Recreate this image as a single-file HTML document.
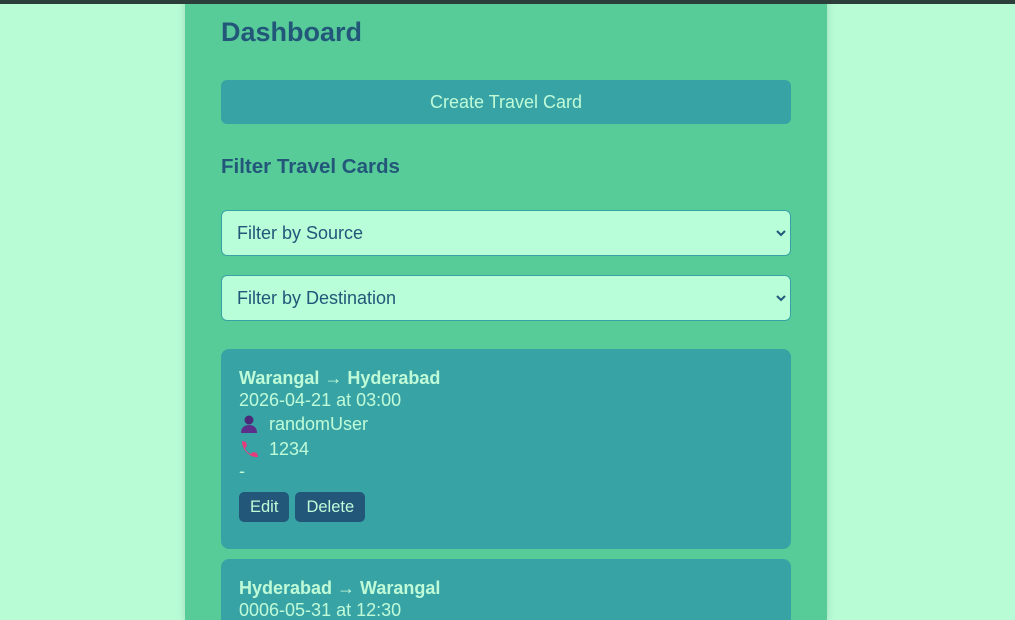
<!DOCTYPE html>
<html><head><style>
html,body{margin:0;height:620px;overflow:hidden}
body{background:#b8fcd6;font-family:"Liberation Sans",sans-serif;width:1015px;position:relative}
.top{position:absolute;top:0;left:0;right:0;height:4px;background:#2c3e3a;z-index:2}
.panel{position:absolute;left:185px;top:0;width:642px;height:620px;background:#57cc99;box-shadow:0 0 8px rgba(0,0,0,.15);overflow:hidden}
h1{position:absolute;left:36px;top:17px;margin:0;font-size:27px;color:#22577a;font-weight:bold}
.create{position:absolute;left:36px;top:80px;width:570px;height:44px;background:#38a3a5;border-radius:6px;color:#c0fbd8;font-size:18px;text-align:center;line-height:44px}
h2{position:absolute;left:36px;top:155px;margin:0;font-size:20.5px;color:#22577a}
.sel{position:absolute;left:36px;height:44px;background:#b8fed8;border:1px solid #38a3a5;border-radius:6px;color:#22577a;font-size:18px;line-height:44px;padding-left:15px;width:553px}
.sel svg{position:absolute;right:4px;top:18px}
.card{position:absolute;left:36px;width:570px;background:#38a3a5;border-radius:8px;color:#c0fbd8;font-size:18px}
.card .in{padding:18px 18px}
.card b{display:block;line-height:22px}
.line{line-height:25px;height:25px}
.btn{display:inline-block;background:#22577a;color:#c0fbd8;font-size:16.5px;padding:0 11px;height:30px;line-height:30px;border-radius:5px;margin-right:3px}
</style></head><body>
<div class="top"></div>
<div class="panel">
<h1>Dashboard</h1>
<div class="create">Create Travel Card</div>
<h2>Filter Travel Cards</h2>
<div class="sel" style="top:210px">Filter by Source<svg width="10" height="8" viewBox="0 0 10 8"><path d="M1 2l4 4 4-4" stroke="#22577a" stroke-width="2" fill="none"/></svg></div>
<div class="sel" style="top:275px">Filter by Destination<svg width="10" height="8" viewBox="0 0 10 8"><path d="M1 2l4 4 4-4" stroke="#22577a" stroke-width="2" fill="none"/></svg></div>
<div class="card" style="top:349px;height:200px"><div class="in">
<b>Warangal → Hyderabad</b>
<div class="line" style="line-height:22px;height:22px">2026-04-21 at 03:00</div>
<div class="line" style="height:25px;line-height:26px"><svg width="20" height="18" viewBox="0 0 20 18" style="vertical-align:-3px;margin-right:10px"><circle cx="10" cy="5" r="4.5" fill="#4b2a7a"/><path d="M2 18c0-6 4-8 8-8s8 2 8 8z" fill="#5b2f8a"/></svg>randomUser</div>
<div class="line" style="line-height:26px"><svg width="20" height="18" viewBox="0 0 20 18" style="vertical-align:-3px;margin-right:10px"><path d="M3 1l4 1 1 4-2 2c1 3 3 5 6 6l2-2 4 1 1 4c-8 1-16-7-16-16z" fill="#e83a7a"/></svg>1234</div>
<div class="line" style="height:22px;line-height:20px">-</div>
<div style="margin-top:9px"><span class="btn">Edit</span><span class="btn" style="margin-left:3px">Delete</span></div>
</div></div>
<div class="card" style="top:559px;height:80px"><div class="in">
<b>Hyderabad → Warangal</b>
<div class="line" style="line-height:22px">0006-05-31 at 12:30</div>
</div></div>
</div>
</body></html>
